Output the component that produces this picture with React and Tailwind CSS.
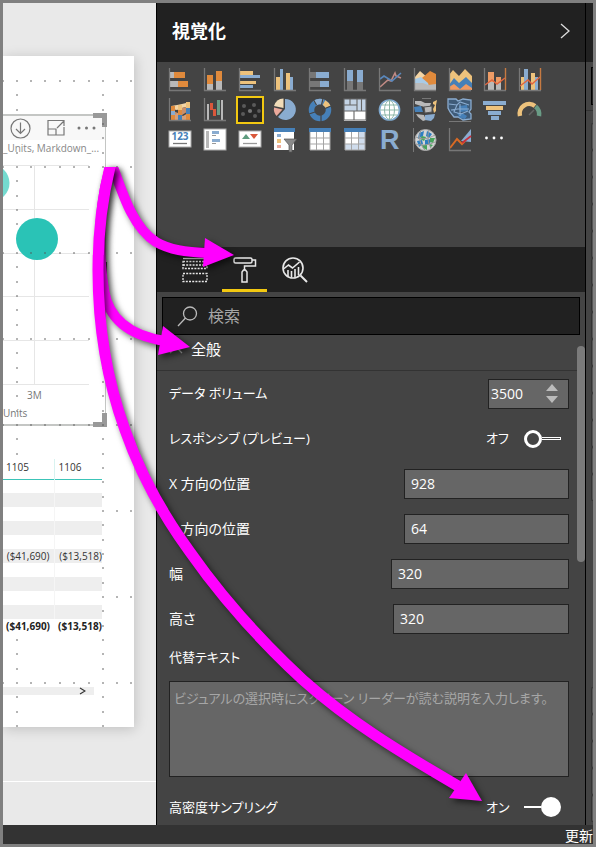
import React, { useState } from "react";

const GREY = "#777777";
const LIGHT = "#b9b9b9";
const ORANGE = "#e08a3c";
const YELLOW = "#edc27c";
const BLUE = "#8aacd0";
const DEEP = "#4680b8";

const Axis = () => <path d="M1.5 0V22.5H23" fill="none" stroke={GREY} strokeWidth="1.3" />;
const Bar = ({ x, y, w, h, c }) => <rect x={x} y={y} width={w} height={h} fill={c} />;

const GridTable = ({ matrix }) => (
  <g>
    <Bar x={2} y={1} w={20} h={21} c="#fff" />
    <Bar x={1} y={0} w={22} h={4} c={DEEP} />
    {matrix && <path d="M15 4h7v18H2v-6h13z" fill="#cfdcec" />}
    <path d="M2 4v18h20V4M8.5 4v18M15.5 4v18M2 10h20M2 16h20" fill="none" stroke="#a5a5a5" strokeWidth="1" />
  </g>
);

const VISUALS = [
  ["積み上げ横棒グラフ", <g><Bar x={2} y={4} w={5} h={6} c={LIGHT} /><Bar x={6} y={4} w={11} h={6} c={ORANGE} /><Bar x={2} y={13} w={8} h={6} c={LIGHT} /><Bar x={10} y={13} w={10} h={6} c={ORANGE} /><Axis /></g>],
  ["積み上げ縦棒グラフ", <g><Bar x={4} y={7} w={6} h={9} c={ORANGE} /><Bar x={4} y={16} w={6} h={6} c={LIGHT} /><Bar x={13} y={3} w={6} h={10} c={ORANGE} /><Bar x={13} y={13} w={6} h={9} c={LIGHT} /><Axis /></g>],
  ["集合横棒グラフ", <g><Bar x={2} y={3} w={13} h={4} c={YELLOW} /><Bar x={2} y={7} w={20} h={3} c={BLUE} /><Bar x={2} y={13} w={16} h={3} c={YELLOW} /><Bar x={2} y={17} w={13} h={3} c={BLUE} /><Axis /></g>],
  ["集合縦棒グラフ", <g><Bar x={3} y={9} w={4} h={13} c={YELLOW} /><Bar x={7} y={1} w={3} h={21} c={BLUE} /><Bar x={13} y={5} w={4} h={17} c={YELLOW} /><Bar x={17} y={9} w={3} h={13} c={BLUE} /><Axis /></g>],
  ["100% 積み上げ横棒グラフ", <g><Bar x={2} y={4} w={6} h={6} c={GREY} /><Bar x={8} y={4} w={13} h={6} c={BLUE} /><Bar x={2} y={13} w={10} h={6} c={GREY} /><Bar x={12} y={13} w={9} h={6} c={BLUE} /><Axis /></g>],
  ["100% 積み上げ縦棒グラフ", <g><Bar x={4} y={2} w={6} h={11} c={BLUE} /><Bar x={4} y={13} w={6} h={9} c={GREY} /><Bar x={14} y={2} w={6} h={12} c={BLUE} /><Bar x={14} y={14} w={6} h={8} c={GREY} /><Axis /></g>],
  ["折れ線グラフ", <g fill="none" strokeWidth="1.6"><path d="M2 19l8-7 3 1 4-8 1 3 5 2" stroke="#c08a84" /><path d="M2 11l4-3 8 5 9-8" stroke="#5a88bd" /><Axis /></g>],
  ["面グラフ", <g><path d="M2 22V9l5-6 8 7 6 4v8z" fill="#f3d4a4" /><path d="M9 10l8-7 6 3v16H9z" fill={ORANGE} /><path d="M2 11l6-2 7 6 1 3H2z" fill="#a9cbe6" /><path d="M2 15h8l5 2 8-1v6H2z" fill={LIGHT} /><Axis /></g>],
  ["積み上げ面グラフ", <g><path d="M1 7l4-5 6 6 6-7 7 7v8H1z" fill={YELLOW} /><path d="M1 17l5-7 5 5 7-6 6 6v7H1z" fill={DEEP} /><path d="M1 22v-3l5-3 6 5 6-5 6 4v2z" fill="#ef9a63" /><Axis /></g>],
  ["折れ線および積み上げ縦棒グラフ", <g><Bar x={5} y={4} w={6} h={10} c="#ee9c66" /><Bar x={5} y={14} w={6} h={8} c={LIGHT} /><Bar x={13} y={9} w={5} h={6} c="#ee9c66" /><Bar x={13} y={15} w={5} h={7} c={LIGHT} /><path d="M2 17l7-5 5 4 8-6" fill="none" stroke="#e2653e" strokeWidth="1.4" /><Axis /><path d="M22.5 0v22" stroke="#c67a42" strokeWidth="1.4" /></g>],
  ["折れ線および集合縦棒グラフ", <g><Bar x={3} y={9} w={3} h={13} c={YELLOW} /><Bar x={6} y={1} w={4} h={21} c={BLUE} /><Bar x={13} y={5} w={4} h={17} c={YELLOW} /><Bar x={17} y={9} w={3} h={13} c={BLUE} /><path d="M2 18l8-6 4 4 8-7" fill="none" stroke="#e2653e" strokeWidth="1.4" /><Axis /><path d="M22.5 0v22" stroke="#c67a42" strokeWidth="1.4" /></g>],
  ["リボン グラフ", <g><path d="M3 8l6-1 5-1 8-2v4l-8 2-5 2-6-1z" fill="#f3d4a4" /><path d="M3 12l7 3 4-5 8-2v4l-8 5-5-1-6 3z" fill="#c98f6b" /><path d="M3 18l7-3 5 3 7-4v8H3z" fill="#d7a079" /><Bar x={3} y={8} w={4} h={5} c={ORANGE} /><Bar x={3} y={13} w={4} h={4} c={BLUE} /><Bar x={3} y={17} w={4} h={5} c={ORANGE} /><Bar x={10} y={7} w={4} h={5} c={YELLOW} /><Bar x={10} y={12} w={4} h={5} c={ORANGE} /><Bar x={10} y={17} w={4} h={5} c={DEEP} /><Bar x={18} y={4} w={4} h={6} c={YELLOW} /><Bar x={18} y={10} w={4} h={6} c={DEEP} /><Bar x={18} y={16} w={4} h={6} c={ORANGE} /><Axis /></g>],
  ["ウォーターフォール図", <g><Bar x={4} y={6} w={2} h={16} c={LIGHT} /><Bar x={7} y={5} w={3} h={7} c="#d9583b" /><Bar x={10} y={11} w={3} h={7} c="#d9583b" /><Bar x={14} y={2} w={3} h={15} c="#6a9c86" /><Bar x={18} y={2} w={2} h={20} c={LIGHT} /><Axis /></g>],
  ["散布図", <g><Bar x={0} y={0} w={24} h={24} c="#262626" /><g fill="#5a5a5a"><circle cx="6" cy="8" r="2" /><circle cx="16" cy="7" r="2" /><circle cx="12" cy="13" r="2.1" fill="#777" /><circle cx="5" cy="16" r="2" /><circle cx="21" cy="13" r="1.9" /><circle cx="17" cy="18" r="2" /></g></g>],
  ["円グラフ", <g><path d="M12 11V1a10.500 10.500 0 1 1-7 18z" fill={BLUE} /><path d="M10.500 10V.5A10.500 10.500 0 0 0 1 8z" fill="#f1dcb8" /><path d="M9.500 11.500 1 9.500a10.500 10.500 0 0 0 2.500 8.500z" fill="#eba99b" /></g>],
  ["ドーナツ グラフ", <g fill="none" strokeWidth="5.500"><circle cx="12" cy="12" r="8.500" stroke={DEEP} /><path d="M7 5.200A8.500 8.500 0 0 1 15 4" stroke={BLUE} /><path d="M16 4.600a8.500 8.500 0 0 1 4 4.500" stroke={YELLOW} /><path d="M5 1l3.500 6M15 .5 13.500 7M23 8l-6 2.500M1 16l6-2M13 17v7" stroke="#444" strokeWidth="1.200" /></g>],
  ["ツリーマップ", <g><Bar x={1} y={1} w={22} h={22} c="#fff" /><Bar x={1} y={1} w={22} h={12} c="#c3d3e5" /><path d="M1 1h22v21H1zM1 7h13M7 1v6M14 1v12M18.500 1v12M1 13h22M11 13v9" fill="none" stroke="#666" strokeWidth="1.100" /></g>],
  ["マップ", <g fill="none"><circle cx="11.500" cy="12" r="10" fill="#fff" stroke="#7fa9cf" strokeWidth="1.700" /><ellipse cx="11.500" cy="12" rx="5" ry="9.500" stroke="#8db7a8" /><path d="M11.500 2v20M2 12h19M3.500 7h16M3.500 17h16" stroke="#8db7a8" /></g>],
  ["塗り分け地図", <g><path d="M.5 0v24M9 .5h9" stroke={GREY} fill="none" /><path d="M2 3h6l4 2h6l-1 3-5 1-4-1-6-2z" fill={LIGHT} /><path d="M1 9l7-1 2 6H2z" fill={DEEP} /><path d="M11 9l8-1v6l-7 1z" fill={LIGHT} stroke="#555" /><path d="M3 16l8 1 2 5-3 1-5-4z" fill={LIGHT} /><path d="M12 17l10-1-1 4-3 3-6-1z" fill={BLUE} /><path d="M20 4l4-2-1 5v6l-2 2-1-4 2-4-2-1z" fill={YELLOW} /></g>],
  ["図形マップ", <g><path d="M0 1h8l2 2 5-2 8 1v9l-2 3 2 2v5l-8 1-5-3-4 0-4-5-2-4z" fill="#3f5b78" stroke={BLUE} strokeWidth="1.300" /><path d="M11 8l8-1 1 6-8 1zM9 15l5 0 5 3-2 3-5-1z" fill={DEEP} /><path d="M1 6l8 1 3-3 9 3M9 7l-3 7 7 2 7-3M12 6v12M3 12l7-1 11 0" fill="none" stroke={BLUE} strokeWidth="1.100" /><path d="M1 23.500h22" stroke={GREY} /></g>],
  ["じょうご", <g><Bar x={0} y={3} w={23} h={4} c={BLUE} /><Bar x={3} y={8} w={17} h={4} c={YELLOW} /><Bar x={5} y={13} w={13} h={4} c={BLUE} /><Bar x={8} y={18} w={8} h={4} c={BLUE} /></g>],
  ["ゲージ", <g fill="none" strokeWidth="4.500"><path d="M2 18A9.500 9.500 0 0 1 17 8" stroke={YELLOW} /><path d="M17.500 8.500A10 10 0 0 1 21 18" stroke="#6a9c86" /><path d="M11 17l5-5" stroke="#666" strokeWidth="1.500" /></g>],
  ["カード", <g><Bar x={1} y={3} w={22} h={16} c="#fff" /><rect x="1" y="3" width="22" height="16" fill="none" stroke="#aaa" /><text x="12" y="12" textAnchor="middle" fontSize="10" fontWeight="700" fontFamily="Noto Sans, sans-serif" fill={DEEP}>123</text><path d="M5 15.500h14" stroke="#777" strokeWidth="1.300" /></g>],
  ["複数の行カード", <g><Bar x={1} y={1} w={22} h={21} c="#fff" /><rect x="1" y="1" width="22" height="21" fill="none" stroke="#aaa" /><Bar x={3} y={3} w={3} h={17} c={LIGHT} /><Bar x={9} y={3} w={7} h={3} c={BLUE} /><path d="M9 7.500h4M9 15.500h4" stroke="#999" /><Bar x={9} y={11} w={8} h={3} c={BLUE} /></g>],
  ["KPI", <g><Bar x={1} y={3} w={22} h={16} c="#fff" /><rect x="1" y="3" width="22" height="16" fill="none" stroke="#aaa" /><path d="M4 11l4-5 4 5z" fill="#5e9c7f" /><path d="M12 6h8l-4 5z" fill="#d9583b" /><path d="M5 15.500h14" stroke="#999" strokeWidth="1.300" /></g>],
  ["スライサー", <g><Bar x={1} y={1} w={20} h={21} c="#fff" /><Bar x={1} y={0} w={21} h={4} c={DEEP} /><Bar x={4} y={6} w={4} h={3} c={BLUE} /><Bar x={4} y={11} w={4} h={4} c={YELLOW} /><Bar x={4} y={17} w={4} h={3} c="#eba99b" /><path d="M11 11h13l-5 6v7h-3v-7z" fill="#8a8a8a" stroke="#555" strokeWidth=".7" /></g>],
  ["テーブル", <GridTable />],
  ["マトリックス", <GridTable matrix />],
  ["R スクリプト ビジュアル", <text x="2" y="21" fontSize="27" fontWeight="700" fontFamily="Liberation Sans, sans-serif" fill={BLUE}>R</text>],
  ["ArcGIS マップ", <g><path d="M.5 0v24" stroke={GREY} /><circle cx="12.500" cy="12" r="10.500" fill="#d5d5d5" stroke="#aaa" /><path d="M6 5l5-2-1 5-5 3zM4 13l5-1 1 4-4 3zM14 3l5 3-3 4-3-2zM12 12l6-1-1 5-5 1z" fill="#2d7fc1" /><path d="M9 8l4 1-2 4-4-2zM17 10l5 0-2 5-3-1zM9 17l5 0 0 5-4-2zM17 16l3 1-3 3z" fill="#48a35c" /><path d="M3 9c6 3 12 2 19-2M3 16c6 2 13 1 19-2M8 2c-3 7-1 15 4 20M16 2c-2 7-1 13 2 18" fill="none" stroke="#999" /></g>],
  ["予測", <g fill="none"><path d="M13 13L23 1v13z" fill={BLUE} /><path d="M2 20l7-9 5 5 3-3" stroke="#d96a24" strokeWidth="2" /><path d="M14 15l9-7" stroke="#c8303c" strokeWidth="1.700" /><Axis /></g>],
  ["その他", <g fill="#fff"><circle cx="3.500" cy="10" r="1.400" /><circle cx="11" cy="10" r="1.400" /><circle cx="18.500" cy="10" r="1.400" /></g>],
];

/* Snap-grid dots of the report page, relative to the page's top-left corner. */
const DOT_X = [0, 14, 28, 42, 57, 71, 86, 100, 114, 128];
const DOTS = [];
for (let k = 0; k < 46; k++) {
  const y = Math.round(25 + k * 14.333);
  const major = k % 6 === 0;
  const overTable = y > 400 && y < 580;
  DOT_X.forEach((x) => {
    if (!major && x !== 14 && x !== 100) return;
    if (overTable && x < 100) return;
    if (x === 14 && ((y > 60 && y < 95) || (y > 175 && y < 195))) return;
    DOTS.push([x, y]);
  });
}

const TABLE_ROWS = [0, 1, 2, 3, 4, 5, 6, 7, 8, 9];

function ReportCanvas() {
  return (
    <main className="w-[153px] shrink-0 overflow-hidden bg-[#e9e9e9] pt-[53px] pr-[22px] font-['Open_Sans','Noto_Sans',sans-serif]">
      <div className="relative h-[671px] bg-white pt-[58px] shadow-[1px_2px_12px_rgba(0,0,0,0.18)]">
        <section className="relative mr-7 h-[312px] border-y-2 border-r border-[#c4c6c4]">
          <div className="flex h-6 items-center bg-[#f8f8f8] pl-[7px] text-[#777]">
            <button aria-label="ドリルダウン" className="mr-4">
              <svg width="21" height="21" viewBox="0 0 21 21" fill="none" stroke="currentColor" strokeWidth="1.2"><circle cx="10.500" cy="10.500" r="9.500" /><path d="M10.500 4.500v11M6 11l4.500 4.500L15 11" /></svg>
            </button>
            <button aria-label="フォーカス モード" className="mr-3">
              <svg width="18" height="18" viewBox="0 0 18 18" fill="none" stroke="currentColor" strokeWidth="1.2"><path d="M12 1.500H1v14.500h16V8M1 10h8v6M10 9l6.500-6.500M11.500 1.500h5.500V7" /></svg>
            </button>
            <button aria-label="その他のオプション">
              <svg width="19" height="6" viewBox="0 0 19 6" fill="currentColor"><circle cx="2" cy="3" r="1.500" /><circle cx="9.500" cy="3" r="1.500" /><circle cx="17" cy="3" r="1.500" /></svg>
            </button>
          </div>
          <h2 className="text-[10px] leading-4 whitespace-nowrap text-[#888]">_Units, Markdown_...</h2>
          <svg className="mt-[7px] block" width="102" height="224" viewBox="0 0 102 224" role="img" aria-label="散布図">
            <path d="M0 2.500h86M0 46.500h86M0 90.500h86M0 133.500h86M0 177.500h86M0 221.500h86M31.500 2v220" stroke="#e6e6e6" fill="none" />
            <circle cx="-12" cy="20" r="18.500" fill="#74dacf" />
            <circle cx="34" cy="76" r="21" fill="#2ac3b6" />
          </svg>
          <div className="pl-6 text-[10px] leading-4 text-[#777]">3M</div>
          <div className="mt-0.5 text-[10px] leading-4 text-[#777]">Units</div>
          <svg className="absolute -top-[3px] -right-[2px]" width="14" height="14" viewBox="0 0 14 14"><path d="M0 0h14v14H9V5H0z" fill="#999" /></svg>
          <svg className="absolute -right-[2px] -bottom-[3px]" width="14" height="14" viewBox="0 0 14 14"><path d="M14 14H0V9h9V0h5z" fill="#999" /></svg>
          <span className="absolute top-[146px] -right-[2px] h-4 w-1 bg-[#555]" />
        </section>
        <table className="mt-[33px] w-[99px] table-fixed border-collapse text-[10px] leading-3 text-[#333]">
          <thead>
            <tr className="h-5 border-b border-[#3cc4b8] text-left">
              <th className="w-[51px] border-r border-r-[#d9f3f0] p-0 pb-1 pl-[3px] font-normal">1105</th>
              <th className="p-0 pb-1 pl-1 font-normal">1106</th>
            </tr>
          </thead>
          <tbody className="text-right">
            {TABLE_ROWS.map((i) => (
              <tr key={i} className={i % 2 ? "h-[14px] bg-[#eee]" : "h-[14px]"}>
                <td className="border-r border-[#f5f5f5] p-0 pr-1">{i === 5 ? "($41,690)" : ""}</td>
                <td className="p-0">{i === 5 ? "($13,518)" : ""}</td>
              </tr>
            ))}
          </tbody>
          <tfoot className="text-right font-bold text-[#222]">
            <tr className="h-[14px]">
              <td className="p-0 pr-1">($41,690)</td>
              <td className="p-0">($13,518)</td>
            </tr>
          </tfoot>
        </table>
        <div className="mt-[54px] mr-10 flex h-2 items-center justify-end bg-[#eee] pr-2">
          <svg width="7" height="8" viewBox="0 0 7 8" fill="none" stroke="#333" strokeWidth="1.2"><path d="M1 1l5 3-5 3" /></svg>
        </div>
        <svg className="pointer-events-none absolute inset-0" width="131" height="671" viewBox="0 0 131 671" fill="#555">
          {DOTS.map(([x, y]) => <circle key={x + "-" + y} cx={x} cy={y} r="0.8" />)}
        </svg>
      </div>
      <hr className="mt-[54px] -mr-[22px] border-t border-white" />
    </main>
  );
}

function Toggle({ label, checked, onChange, id }) {
  return (
    <div className="flex flex-1 items-center justify-between">
      <label htmlFor={id} className="text-[13px]">{label}</label>
      <label className="flex items-center gap-4 pr-2">
        <span className="w-[22px] text-[13px] whitespace-nowrap">{checked ? "オン" : "オフ"}</span>
        <input id={id} type="checkbox" checked={checked} onChange={onChange} className="sr-only" />
        <span className={checked ? "flex w-[37px] flex-row-reverse items-center" : "flex w-[37px] items-center"}>
          <span className={checked ? "size-5 rounded-full bg-white" : "size-[18px] rounded-full border-3 border-white"} />
          <span className={checked ? "h-0.5 flex-1 bg-white" : "h-[3px] flex-1 border border-l-0 border-white"} />
        </span>
      </label>
    </div>
  );
}

function TextRow({ id, label, value, width }) {
  return (
    <div className="flex h-[45px] items-center justify-between">
      <label htmlFor={id}>{label}</label>
      <input id={id} defaultValue={value} className={"h-[30px] border border-[#222] bg-[#666] px-1.5 text-sm text-white outline-none " + width} />
    </div>
  );
}

function Visualizations() {
  const [volume, setVolume] = useState(3500);
  const [responsive, setResponsive] = useState(false);
  const [sampling, setSampling] = useState(true);
  return (
    <aside className="relative min-w-0 flex-1 border-x border-black bg-[#444]">
      <header className="flex h-[59px] items-center justify-between bg-[#212121] pr-[15px] pb-1 pl-[15px]">
        <h1 className="text-lg font-bold text-white">視覚化</h1>
        <button aria-label="折りたたむ">
          <svg width="10" height="16" viewBox="0 0 10 16" fill="none" stroke="#ddd" strokeWidth="1.3"><path d="M1 1l8 7-8 7" /></svg>
        </button>
      </header>
      <div className="flex h-[185px] flex-wrap content-start gap-x-[11px] gap-y-1.5 pt-1.5 pr-6 pl-[11px]">
        {VISUALS.map(([name, art]) => (
          <button key={name} aria-label={name} className={name === "散布図" ? "size-6 outline-2 outline-[#f2c811]" : "size-6"}>
            <svg className="overflow-visible" width="24" height="24" viewBox="0 0 24 24">{art}</svg>
          </button>
        ))}
      </div>
      <nav className="flex h-[45px] gap-[5px] bg-[#212121] pl-[15px] text-[#e8e8e8]">
        <button aria-label="フィールド" className="flex w-[45px] items-center justify-center">
          <svg width="26" height="26" viewBox="0 0 26 26" fill="none" stroke="currentColor" strokeWidth="1.3"><path d="M1 1.500h24" /><g strokeDasharray="2 1.200"><path d="M1 4.500h24v7H1zM1 16.500h24v8H1zM1 8h24" /></g></svg>
        </button>
        <button aria-label="書式" className="flex w-[45px] items-center justify-center border-b-3 border-[#f2c811] pt-[3px]">
          <svg width="24" height="26" viewBox="0 0 24 26" fill="none" stroke="currentColor" strokeWidth="1.5"><rect x="1" y="1" width="18" height="5" rx="1.500" /><path d="M19 3h3.500v6H11.500v4.500" /><path d="M9 25V15l1.500-2h2l1.500 2v10z" /></svg>
        </button>
        <button aria-label="分析" className="flex w-[45px] items-center justify-center">
          <svg width="26" height="26" viewBox="0 0 26 26" fill="none" stroke="currentColor" strokeWidth="1.6"><circle cx="11" cy="11" r="10" /><path d="M1.500 12l5-4 4 3 7-6M6 13v6M9.500 14v6.500M13 12v8.500M16.500 10v8" /><path d="M18.500 18.500 25 25" strokeWidth="2" /></svg>
        </button>
      </nav>
      <div className="mx-[5px] mt-[5px] flex h-[38px] items-center gap-2.5 border border-black bg-[#212121] pl-3.5">
        <svg width="21" height="21" viewBox="0 0 21 21" fill="none" stroke="#bbb" strokeWidth="1.3"><circle cx="13" cy="7.500" r="6.500" /><path d="M8.500 12 1 20" /></svg>
        <input aria-label="検索" placeholder="検索" className="min-w-0 flex-1 bg-transparent text-base text-white outline-none placeholder:text-[#a6a6a6]" />
      </div>
      <button className="flex h-9 w-full items-start gap-2 border-b border-[#333] pt-0.5 pl-3 text-[15px] leading-6 text-white">
        <svg className="mt-2" width="14" height="9" viewBox="0 0 14 9" fill="none" stroke="#aaa" strokeWidth="1.3"><path d="M1 8l6-6 6 6" /></svg>
        全般
      </button>
      <form className="pr-4 pl-3 text-sm text-white">
        <div className="flex h-[45px] items-center justify-between">
          <label htmlFor="volume" className="text-[13px]">データ ボリューム</label>
          <div className="flex h-[30px] w-[81px] border border-[#222] bg-[#666]">
            <input id="volume" inputMode="numeric" value={volume} onChange={(e) => setVolume(Number(e.target.value) || 0)} className="w-14 bg-transparent pl-0.5 text-sm outline-none" />
            <div className="flex flex-col justify-center gap-[5px]">
              <button type="button" aria-label="増やす" onClick={() => setVolume(volume + 1)}><svg className="block" width="14" height="7" viewBox="0 0 14 7"><path d="M1 7l6-7 6 7z" fill="#bbb" /></svg></button>
              <button type="button" aria-label="減らす" onClick={() => setVolume(volume - 1)}><svg className="block" width="14" height="7" viewBox="0 0 14 7"><path d="M1 0l6 7 6-7z" fill="#bbb" /></svg></button>
            </div>
          </div>
        </div>
        <div className="flex h-[45px]">
          <Toggle id="responsive" label="レスポンシブ (プレビュー)" checked={responsive} onChange={() => setResponsive(!responsive)} />
        </div>
        <TextRow id="x" label="X 方向の位置" value="928" width="w-[165px]" />
        <TextRow id="y" label="Y 方向の位置" value="64" width="w-[165px]" />
        <TextRow id="width" label="幅" value="320" width="w-[178px]" />
        <TextRow id="height" label="高さ" value="320" width="w-[176px]" />
        <label htmlFor="alt" className="mb-2 block h-8 text-[13px] leading-8">代替テキスト</label>
        <textarea id="alt" placeholder="ビジュアルの選択時にスクリーン リーダーが読む説明を入力します。" className="block h-24 w-full resize-none border border-[#222] bg-[#666] px-1 py-1.5 text-[13px] leading-5 outline-none placeholder:text-[#a6a6a6]" />
        <div className="mt-3 flex h-9">
          <Toggle id="sampling" label="高密度サンプリング" checked={sampling} onChange={() => setSampling(!sampling)} />
        </div>
      </form>
      <div className="absolute top-[343px] right-0 h-[216px] w-2 rounded-full bg-[#7b7b7b]" />
    </aside>
  );
}

function FieldsEdge() {
  return (
    <aside className="w-[7px] shrink-0 overflow-hidden bg-[#444]">
      <div className="h-[59px] bg-[#212121]" />
      <div className="mt-[5px] ml-[5px] h-[38px] border border-r-0 border-black bg-[#212121]" />
      <div className="mt-[5px] mb-3 h-px bg-[#333]" />
      {[0, 1, 2, 3, 4, 5, 6, 7, 8, 9, 10, 11, 12, 13].map((i) => (
        <div key={i} className="ml-[5px] h-[27px] rounded-l-sm border border-r-0 border-[#333] bg-[#555]" />
      ))}
      <div className="h-[186px]" />
      {[0, 1, 2, 3, 4].map((i) => (
        <div key={i} className="ml-[5px] h-[27px] rounded-l-sm border border-r-0 border-[#333] bg-[#555]" />
      ))}
    </aside>
  );
}

function CalloutArrows() {
  return (
    <svg className="pointer-events-none absolute -top-[3px] -left-[3px]" width="596" height="847" viewBox="0 0 596 847" fill="none" stroke="#ff00ff">
      <clipPath id="below-start"><rect x="0" y="167" width="596" height="680" /></clipPath>
      <g className="drop-shadow-[3px_3px_3px_rgba(0,0,0,0.6)]">
        <g clipPath="url(#below-start)">
          <path d="M109 157L113 167C124 198 134 228 156 242C170 250 185 252 208 253" strokeWidth="10" />
        </g>
        <path d="M205 238L234 255L203 267Z" fill="#ff00ff" stroke="none" />
      </g>
      <g className="drop-shadow-[3px_3px_3px_rgba(0,0,0,0.6)]">
        <g clipPath="url(#below-start)">
          <path d="M113 157L110 167C99 205 97 245 104 290C108 316 126 335 165 341" strokeWidth="10" />
        </g>
        <path d="M163 326L190 347L158 355Z" fill="#ff00ff" stroke="none" />
      </g>
      <g className="drop-shadow-[3px_3px_3px_rgba(0,0,0,0.6)]">
        <g clipPath="url(#below-start)">
          <path d="M113 157L110 167C102 200 98 235 98 270C98 320 104 372 125 430C140 473 163 515 190 552C225 602 262 642 303 680C350 722 400 752 458 786" strokeWidth="11" />
        </g>
        <path d="M466 773L482 801L449 798Z" fill="#ff00ff" stroke="none" />
      </g>
    </svg>
  );
}

export default function App() {
  return (
    <div className="relative flex min-h-screen flex-col overflow-hidden border-3 border-[#808080] bg-[#333] font-['Open_Sans','Noto_Sans_CJK_JP',sans-serif] [font-feature-settings:'palt']">
      <div className="flex flex-1">
        <ReportCanvas />
        <Visualizations />
        <FieldsEdge />
      </div>
      <footer className="flex h-[19px] items-end justify-end text-sm leading-4 text-white">更新</footer>
      <CalloutArrows />
    </div>
  );
}
